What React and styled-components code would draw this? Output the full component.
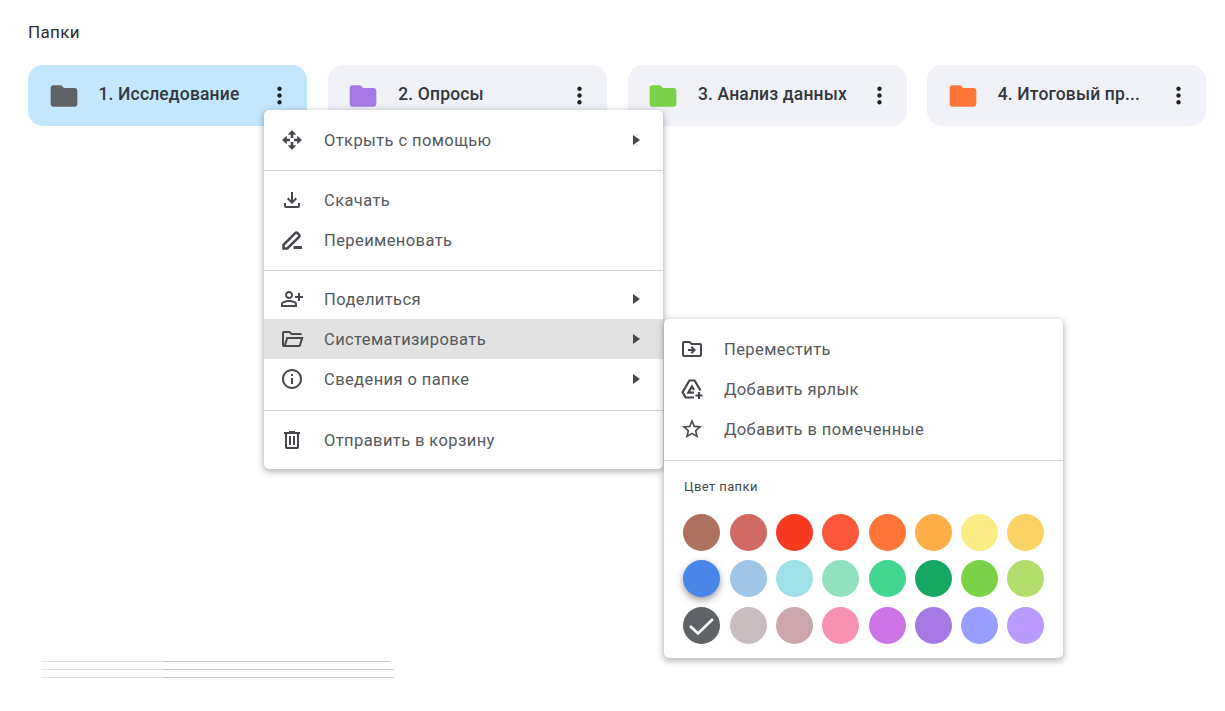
import styled, { createGlobalStyle } from 'styled-components'
import {
  MdFolder,
  MdMoreVert,
  MdOutlineFileDownload,
  MdOutlinePersonAddAlt,
  MdInfoOutline,
  MdOutlineDriveFileMove,
  MdStarBorder,
} from 'react-icons/md'

const GlobalStyle = createGlobalStyle`
  html, body {
    margin: 0;
    background: #fff;
    font-family: Roboto, "Liberation Sans", sans-serif;
  }
`

const Page = styled.div`
  position: relative;
  width: 1225px;
  height: 711px;
  box-sizing: border-box;
  padding: 22px 18px 0 28px;
  overflow: hidden;
`

const Title = styled.h2`
  margin: 0;
  font-size: 17px;
  line-height: 20px;
  font-weight: 400;
  letter-spacing: 0.35px;
  color: #2a2c2f;
`

const CardRow = styled.div`
  display: grid;
  grid-template-columns: repeat(4, 279px);
  column-gap: 20.75px;
  margin-top: 23px;
`

const Card = styled.div`
  display: flex;
  align-items: center;
  height: 61px;
  padding: 0 14px 0 19.5px;
  border-radius: 15px;
  background: ${(p) => (p.$active ? '#c2e7ff' : '#f0f2f8')};
  color: #33373c;
  svg {
    flex: none;
  }
`

const CardName = styled.span`
  flex: 1;
  min-width: 0;
  margin: 0 14px 3px 19px;
  font-size: 17.5px;
  font-weight: 500;
  letter-spacing: 0.15px;
  white-space: nowrap;
`

const Menu = styled.div`
  position: absolute;
  left: 264px;
  top: 110px;
  width: 399px;
  padding: 10px 0 9px;
  border-radius: 5px;
  background: #fff;
  box-shadow: 0 2px 6px 1px rgba(60, 64, 67, 0.38);
  color: #55585c;
`

const SubMenu = styled(Menu)`
  left: 400px;
  top: 209px;
  height: 339px;
  box-sizing: border-box;
  z-index: 2;
`

const Row = styled.div`
  display: flex;
  align-items: center;
  height: 40px;
  padding: 0 23px 0 16px;
  background: ${(p) => (p.$hover ? '#e2e2e2' : 'transparent')};
  font-size: 16.5px;
  letter-spacing: 0.4px;
  svg {
    flex: none;
    color: #45484c;
  }
`

const RowLabel = styled.span`
  flex: 1;
  margin-left: 20px;
`

const Arrow = styled.i`
  width: 0;
  height: 0;
  border-left: 7px solid #45484c;
  border-top: 5.5px solid transparent;
  border-bottom: 5.5px solid transparent;
`

const Divider = styled.hr`
  margin: ${(p) => p.$before ?? 10}px 0 ${(p) => p.$after ?? 9}px;
  border: 0;
  border-top: 1px solid #d2d3d4;
`

const PaletteTitle = styled.div`
  margin: 18px 0 0 20px;
  font-size: 13px;
  line-height: 15px;
  letter-spacing: 0.4px;
  color: #45484c;
`

const Palette = styled.div`
  display: grid;
  grid-template-columns: repeat(8, 37px);
  gap: 9.3px;
  margin: 20px 0 0 19.4px;
`

const Swatch = styled.div`
  display: flex;
  align-items: center;
  justify-content: center;
  width: 37px;
  height: 37px;
  border-radius: 50%;
  background: ${(p) => p.$color};
  box-shadow: ${(p) => (p.$raised ? '0 3px 7px rgba(50, 50, 60, 0.5)' : 'none')};
`

const Remnant = styled.div`
  width: 354px;
  margin: 535px 0 0 13px;
`

const RemnantLine = styled.div`
  width: ${(p) => p.$width}px;
  height: 1px;
  margin-bottom: 7px;
  background: linear-gradient(90deg, #e2e2e2 0 120px, #c6c6c6 125px);
`

// icons that the packages only have in a different cut
const MoveIcon = ({ size }) => (
  <svg width={size} height={size} viewBox="0 0 24 24" fill="currentColor">
    <path d="M12 2L7.8 6.8h2.9V10h2.6V6.8h2.9z" />
    <path d="M12 22l-4.2-4.8h2.9V14h2.6v3.2h2.9z" />
    <path d="M2 12l4.8-4.2v2.9H10v2.6H6.8v2.9z" />
    <path d="M22 12l-4.8-4.2v2.9H14v2.6h3.2v2.9z" />
  </svg>
)

const RenameIcon = ({ size }) => (
  <svg width={size} height={size} viewBox="0 0 24 24" fill="none" stroke="currentColor" strokeWidth="2.5">
    <path d="M3.5 20.5v-3.7L15 5.3a2 2 0 0 1 2.8 0l1 1a2 2 0 0 1 0 2.8L7.3 20.5z" />
    <path d="M13.5 19.5h8.5" strokeWidth="3" />
  </svg>
)

const OpenFolderIcon = ({ size }) => (
  <svg width={size} height={size} viewBox="0 0 24 24" fill="currentColor">
    <path d="M4 20q-.825 0-1.412-.587Q2 18.825 2 18V6q0-.825.588-1.412Q3.175 4 4 4h6l2 2h8q.825 0 1.413.588Q22 7.175 22 8H11.175l-2-2H4v12l2.4-8h17.1l-2.575 8.575q-.2.65-.737 1.038Q19.65 20 19 20Zm2.1-2H19l1.8-6H7.9Z" />
  </svg>
)

const TrashIcon = ({ size }) => (
  <svg width={size} height={size} viewBox="0 0 24 24" fill="currentColor">
    <path d="M7 21q-.825 0-1.412-.587Q5 19.825 5 19V6H4V4h5V3h6v1h5v2h-1v13q0 .825-.587 1.413Q17.825 21 17 21ZM17 6H7v13h10ZM9 17h2V8H9Zm4 0h2V8h-2Z" />
  </svg>
)

const ShortcutIcon = ({ size }) => (
  <svg width={size} height={size} viewBox="0 0 24 24" fill="none" stroke="currentColor" strokeWidth="2.2">
    <path d="M20.5 13.5L14.6 3.5H9.4L2.6 15.2l3 5.3H14" />
    <path d="M14 15.7H8.3l3.6-6.2 2 3.4" />
    <path d="M19 15v7M15.5 18.5h7" />
  </svg>
)

const folders = [
  { name: '1. Исследование', color: '#5f6368', active: true },
  { name: '2. Опросы', color: '#a47ae2' },
  { name: '3. Анализ данных', color: '#7bd148' },
  { name: '4. Итоговый пр...', color: '#ff7537' },
]

const palette = [
  '#ac725e', '#d06b64', '#f83a22', '#fa573c', '#ff7537', '#ffad46', '#fdeb85', '#fad165',
  '#4986e7', '#9fc6e7', '#9fe1e7', '#92e1c0', '#42d692', '#16a765', '#7bd148', '#b3dc6c',
  '#5f6368', '#cabdbf', '#cca6ac', '#f691b2', '#cd74e6', '#a47ae2', '#9a9cff', '#b99aff',
]

function MenuRow({ icon: Icon, label, arrow, hover }) {
  return (
    <Row $hover={hover}>
      <Icon size={24} />
      <RowLabel>{label}</RowLabel>
      {arrow && <Arrow />}
    </Row>
  )
}

function App() {
  return (
    <Page>
      <GlobalStyle />
      <Title>Папки</Title>
      <CardRow>
        {folders.map((f) => (
          <Card key={f.name} $active={f.active}>
            <MdFolder size={32} color={f.color} />
            <CardName>{f.name}</CardName>
            <MdMoreVert size={27} color="#202124" />
          </Card>
        ))}
      </CardRow>

      <Remnant>
        <RemnantLine $width={349} />
        <RemnantLine $width={353} />
        <RemnantLine $width={353} />
      </Remnant>

      <Menu>
        <MenuRow icon={MoveIcon} label="Открыть с помощью" arrow />
        <Divider />
        <MenuRow icon={MdOutlineFileDownload} label="Скачать" />
        <MenuRow icon={RenameIcon} label="Переименовать" />
        <Divider $after={8} />
        <MenuRow icon={MdOutlinePersonAddAlt} label="Поделиться" arrow />
        <MenuRow icon={OpenFolderIcon} label="Систематизировать" arrow hover />
        <MenuRow icon={MdInfoOutline} label="Сведения о папке" arrow />
        <Divider $before={11} />
        <MenuRow icon={TrashIcon} label="Отправить в корзину" />

        <SubMenu>
          <MenuRow icon={MdOutlineDriveFileMove} label="Переместить" />
          <MenuRow icon={ShortcutIcon} label="Добавить ярлык" />
          <MenuRow icon={MdStarBorder} label="Добавить в помеченные" />
          <Divider $before={11} $after={0} />
          <PaletteTitle>Цвет папки</PaletteTitle>
          <Palette>
            {palette.map((color, i) => (
              <Swatch key={i} $color={color} $raised={i === 8}>
                {i === 16 && (
                  <svg width="37" height="37" viewBox="0 0 37 37" fill="none">
                    <path d="M7 19l8 7.5L30 12" stroke="#fff" strokeWidth="2.6" />
                  </svg>
                )}
              </Swatch>
            ))}
          </Palette>
        </SubMenu>
      </Menu>
    </Page>
  )
}

export default App
